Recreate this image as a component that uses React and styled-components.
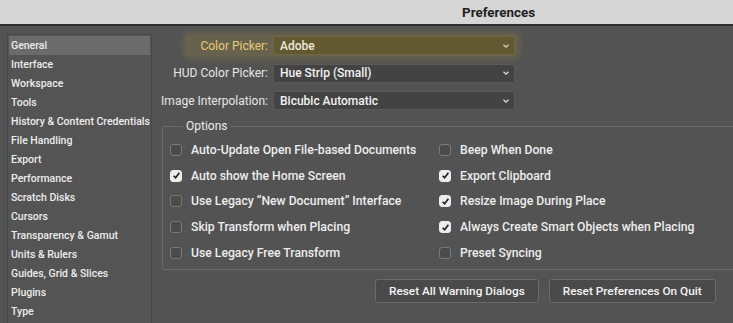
import React from 'react';
import styled, { createGlobalStyle } from 'styled-components';

const GlobalStyle = createGlobalStyle`
  html, body {
    margin: 0;
    padding: 0;
    background: #535353;
    overflow: hidden;
  }
  body {
    font-family: Roboto, "Liberation Sans", Arial, sans-serif;
    -webkit-font-smoothing: antialiased;
  }
`;

const sections = [
  'General',
  'Interface',
  'Workspace',
  'Tools',
  'History & Content Credentials',
  'File Handling',
  'Export',
  'Performance',
  'Scratch Disks',
  'Cursors',
  'Transparency & Gamut',
  'Units & Rulers',
  'Guides, Grid & Slices',
  'Plugins',
  'Type',
];

const pickers = [
  { label: 'Color Picker:', value: 'Adobe', highlight: true },
  { label: 'HUD Color Picker:', value: 'Hue Strip (Small)' },
  { label: 'Image Interpolation:', value: 'Bicubic Automatic' },
];

const leftOptions = [
  { text: 'Auto-Update Open File-based Documents', on: false },
  { text: 'Auto show the Home Screen', on: true },
  { text: 'Use Legacy \u201CNew Document\u201D Interface', on: false },
  { text: 'Skip Transform when Placing', on: false },
  { text: 'Use Legacy Free Transform', on: false },
];

const rightOptions = [
  { text: 'Beep When Done', on: false },
  { text: 'Export Clipboard', on: true },
  { text: 'Resize Image During Place', on: true },
  { text: 'Always Create Smart Objects when Placing', on: true },
  { text: 'Preset Syncing', on: false },
];

const Window = styled.div`
  width: 733px;
  height: 323px;
  display: flex;
  flex-direction: column;
  background: #535353;
  overflow: hidden;
`;

const TitleBar = styled.div`
  height: 24px;
  flex: none;
  background: #d6d6d6;
  border-bottom: 2px solid #2e2e2e;
  display: flex;
  align-items: center;
  padding-left: 462px;
  font-size: 13.4px;
  font-weight: 700;
  color: #1e1e1e;
`;

const Body = styled.div`
  flex: 1;
  display: flex;
  padding: 8px 0 0 7px;
  gap: 8px;
  min-height: 0;
`;

const Sidebar = styled.ul`
  list-style: none;
  margin: 0;
  padding: 1px;
  width: 141px;
  flex: none;
  border: 1px solid #474747;
  border-bottom: none;
  background: #545454;
`;

const SideItem = styled.li`
  height: 19px;
  line-height: 19px;
  padding-left: 2px;
  font-size: 10.5px;
  font-weight: 500;
  color: #ececec;
  white-space: nowrap;
  background: ${p => (p.$active ? '#6b6b6b' : 'transparent')};
`;

const Main = styled.div`
  flex: 1;
  display: flex;
  flex-direction: column;
  padding-top: 2px;
`;

const PickerList = styled.div`
  display: flex;
  flex-direction: column;
  gap: 8.5px;
`;

const PickerRow = styled.div`
  position: relative;
  display: grid;
  grid-template-columns: 108px 242px;
  column-gap: 5px;
  align-items: center;
  height: 19px;
  width: 355px;
  &::before {
    content: '';
    display: ${p => (p.$highlight ? 'block' : 'none')};
    position: absolute;
    left: 26px;
    right: -2px;
    top: -1px;
    bottom: -1px;
    background: rgba(214, 182, 52, 0.16);
    box-shadow: 0 0 6px 3px rgba(214, 182, 52, 0.16);
    border-radius: 3px;
    pointer-events: none;
  }
`;

const PickerLabel = styled.span`
  text-align: right;
  font-size: 12px;
  color: ${p => (p.$highlight ? '#ead282' : '#e6e6e6')};
  white-space: nowrap;
`;

const Select = styled.div`
  height: 19px;
  box-sizing: border-box;
  display: flex;
  align-items: center;
  justify-content: space-between;
  padding: 0 4px 0 6px;
  background: ${p => (p.$highlight ? '#4d4834' : '#434343')};
  border: 1px solid ${p => (p.$highlight ? '#5e5843' : '#5a5a5a')};
  border-radius: 2px;
  font-size: 12px;
  font-weight: 500;
  color: #f2f2f2;
`;

const Chevron = () => (
  <svg width="8" height="6" viewBox="0 0 8 6">
    <path d="M1.5 1.8 L4 4.2 L6.5 1.8" fill="none" stroke="#dcdcdc" strokeWidth="1.3" />
  </svg>
);

const Options = styled.fieldset`
  margin: 9px -60px 0 2px;
  padding: 4px 0 3px 7px;
  border: 1px solid #6a6a6a;
  border-radius: 2px;
  display: grid;
  grid-template-columns: 269px 1fr;
`;

const Legend = styled.legend`
  padding: 0 3px;
  margin-left: 13px;
  font-size: 12px;
  color: #ececec;
`;

const Column = styled.div`
  display: flex;
  flex-direction: column;
`;

const CheckRow = styled.label`
  height: 25.8px;
  display: flex;
  align-items: center;
  gap: 9px;
  font-size: 12.2px;
  font-weight: 500;
  color: #ededed;
  white-space: nowrap;
`;

const Box = styled.span`
  width: 12px;
  height: 12px;
  box-sizing: border-box;
  flex: none;
  border-radius: 3px;
  display: flex;
  align-items: center;
  justify-content: center;
  background: ${p => (p.$on ? '#ececec' : '#4b4b4b')};
  border: 1px solid ${p => (p.$on ? '#ececec' : '#7a7a7a')};
`;

const Check = () => (
  <svg width="9" height="9" viewBox="0 0 9 9">
    <path d="M1.6 4.8 L3.6 6.8 L7.4 1.8" fill="none" stroke="#1d1d1d" strokeWidth="1.6" />
  </svg>
);

const ButtonBar = styled.div`
  display: flex;
  gap: 10px;
  margin-top: 9px;
  padding-left: 215px;
`;

const Button = styled.button`
  height: 24px;
  padding: 0 13px;
  background: #4a4a4a;
  border: 1px solid #6b6b6b;
  border-radius: 3px;
  font-family: inherit;
  font-size: 11.8px;
  font-weight: 500;
  color: #f4f4f4;
  white-space: nowrap;
`;

const Option = ({ text, on }) => (
  <CheckRow>
    <Box $on={on}>{on && <Check />}</Box>
    {text}
  </CheckRow>
);

export default function App() {
  return (
    <Window>
      <GlobalStyle />
      <TitleBar>Preferences</TitleBar>
      <Body>
        <Sidebar>
          {sections.map((s, i) => (
            <SideItem key={s} $active={i === 0}>{s}</SideItem>
          ))}
        </Sidebar>
        <Main>
          <PickerList>
            {pickers.map(p => (
              <PickerRow key={p.label} $highlight={p.highlight}>
                <PickerLabel $highlight={p.highlight}>{p.label}</PickerLabel>
                <Select $highlight={p.highlight}>
                  {p.value}
                  <Chevron />
                </Select>
              </PickerRow>
            ))}
          </PickerList>
          <Options>
            <Legend>Options</Legend>
            <Column>
              {leftOptions.map(o => <Option key={o.text} {...o} />)}
            </Column>
            <Column>
              {rightOptions.map(o => <Option key={o.text} {...o} />)}
            </Column>
          </Options>
          <ButtonBar>
            <Button>Reset All Warning Dialogs</Button>
            <Button>Reset Preferences On Quit</Button>
          </ButtonBar>
        </Main>
      </Body>
    </Window>
  );
}
